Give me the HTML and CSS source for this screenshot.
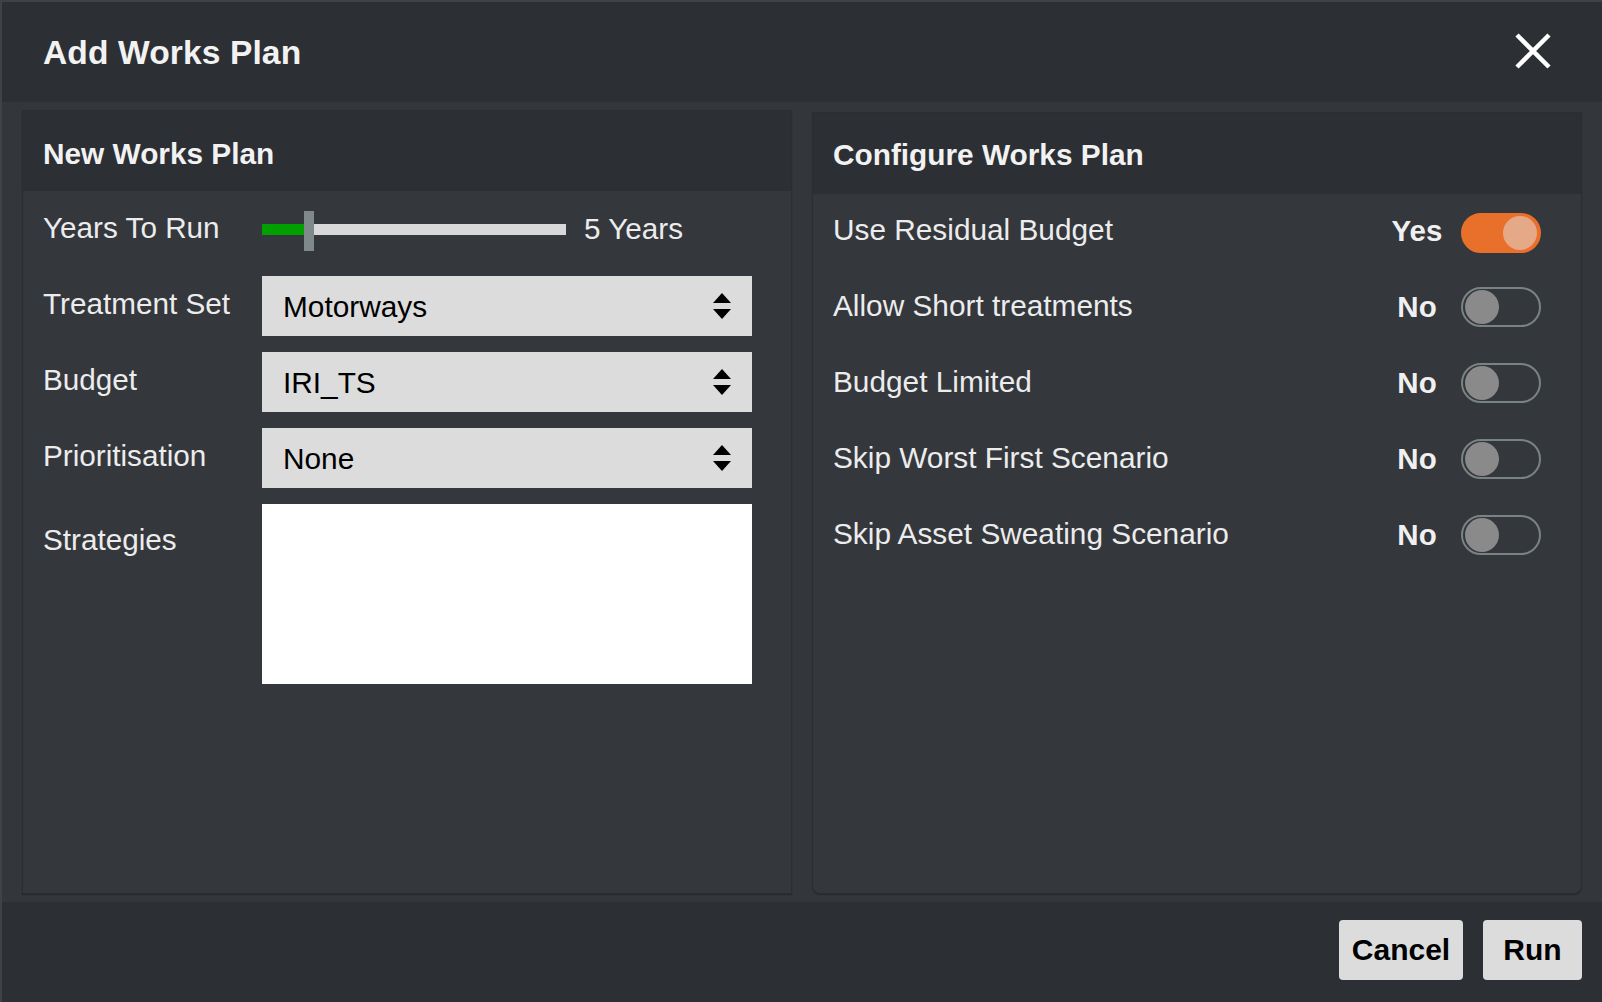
FILE: index.html
```html
<!DOCTYPE html>
<html>
<head>
<meta charset="utf-8">
<title>Add Works Plan</title>
<link rel="stylesheet" href="styles.css">
</head>
<body>
<div class="modal">
  <div class="modal-header">
    <h1 class="modal-title">Add Works Plan</h1>
    <button class="close-btn" aria-label="Close">
      <svg width="36" height="36" viewBox="0 0 36 36"><path d="M2 2 L34 34 M34 2 L2 34" stroke="#ffffff" stroke-width="4.5" stroke-linecap="butt" fill="none"/></svg>
    </button>
  </div>
  <div class="modal-body">
    <section class="panel panel-left">
      <div class="panel-header"><h2>New Works Plan</h2></div>
      <div class="panel-content form-grid">
        <div class="label">Years To Run</div>
        <div class="slider-wrap">
          <div class="slider">
            <div class="slider-fill" style="width: 42px"></div>
            <div class="slider-thumb" style="left: 42px"></div>
          </div>
          <span class="slider-value">5 Years</span>
        </div>

        <div class="label">Treatment Set</div>
        <div class="select"><span>Motorways</span><span class="arrows"><i class="up"></i><i class="down"></i></span></div>

        <div class="label">Budget</div>
        <div class="select"><span>IRI_TS</span><span class="arrows"><i class="up"></i><i class="down"></i></span></div>

        <div class="label">Prioritisation</div>
        <div class="select"><span>None</span><span class="arrows"><i class="up"></i><i class="down"></i></span></div>

        <div class="label label-top">Strategies</div>
        <div class="listbox"></div>
      </div>
    </section>
    <section class="panel panel-right">
      <div class="panel-header"><h2>Configure Works Plan</h2></div>
      <div class="panel-content options">
        <div class="option">
          <span class="option-label">Use Residual Budget</span>
          <span class="option-state">Yes</span>
          <span class="toggle on"><span class="knob"></span></span>
        </div>
        <div class="option">
          <span class="option-label">Allow Short treatments</span>
          <span class="option-state">No</span>
          <span class="toggle"><span class="knob"></span></span>
        </div>
        <div class="option">
          <span class="option-label">Budget Limited</span>
          <span class="option-state">No</span>
          <span class="toggle"><span class="knob"></span></span>
        </div>
        <div class="option">
          <span class="option-label">Skip Worst First Scenario</span>
          <span class="option-state">No</span>
          <span class="toggle"><span class="knob"></span></span>
        </div>
        <div class="option">
          <span class="option-label">Skip Asset Sweating Scenario</span>
          <span class="option-state">No</span>
          <span class="toggle"><span class="knob"></span></span>
        </div>
      </div>
    </section>
  </div>
  <div class="modal-footer">
    <button class="btn btn-cancel">Cancel</button>
    <button class="btn btn-run">Run</button>
  </div>
</div>
</body>
</html>
```

FILE: styles.css
```css
* { box-sizing: border-box; }

html, body {
  margin: 0;
  padding: 0;
  background: #2c2f34;
}

body {
  font-family: "Liberation Sans", Arial, Helvetica, sans-serif;
  color: #ececec;
}

.modal {
  width: 1602px;
  height: 1002px;
  display: flex;
  flex-direction: column;
  border-top: 2px solid #3f4247;
  border-left: 2px solid #3f4247;
  background: #2c2f34;
  overflow: hidden;
}

.modal-header {
  height: 100px;
  flex: none;
  display: flex;
  align-items: center;
  justify-content: space-between;
  padding: 2px 51px 0 41px;
  background: #2c2f34;
}

.modal-title {
  margin: 0;
  font-size: 33.6px;
  font-weight: bold;
  color: #f2f2f2;
  letter-spacing: 0.1px;
}

.close-btn {
  border: 0;
  padding: 0;
  background: transparent;
  width: 36px;
  height: 36px;
  display: flex;
  margin-top: -4px;
}

.modal-body {
  flex: 1;
  display: flex;
  gap: 20px;
  padding: 8px 20px 8px 20px;
  background: #33363b;
}

.panel {
  flex: 1;
  display: flex;
  flex-direction: column;
  background: #34373c;
  border: 1px solid #2a2d31;
  box-shadow: 0 1px 1px rgba(0,0,0,0.25);
}

.panel-right {
  margin-top: 2px;
  border-radius: 0 0 8px 8px;
}

.panel-header {
  height: 80px;
  flex: none;
  display: flex;
  align-items: center;
  padding: 5px 20px 0 20px;
  background: #2c2f34;
}

.panel-right .panel-header { height: 81px; padding-top: 3px; }

.panel-header h2 {
  margin: 0;
  font-size: 29.8px;
  font-weight: bold;
  color: #f2f2f2;
}

.panel-content { flex: 1; }

.form-grid {
  display: grid;
  grid-template-columns: 219px 490px;
  grid-template-rows: 61px 60px 60px 60px 180px;
  row-gap: 16px;
  padding: 8px 20px 0 20px;
  align-items: center;
}

.label {
  font-size: 29.7px;
  line-height: 34px;
  color: #ececec;
  margin-top: -4px;
}

.label-top {
  align-self: start;
  margin-top: 19px;
}

.slider-wrap {
  display: flex;
  align-items: center;
  gap: 18px;
}

.slider {
  position: relative;
  width: 304px;
  height: 11px;
  background: #d8d8d8;
}

.slider-fill {
  height: 100%;
  background: #00a000;
}

.slider-thumb {
  position: absolute;
  top: -13px;
  width: 10px;
  height: 40px;
  background: #7f8989;
}

.slider-value {
  font-size: 29.7px;
  color: #ececec;
  margin-top: -2px;
}

.select {
  height: 60px;
  background: #dcdcdc;
  color: #000;
  font-size: 29.8px;
  display: flex;
  align-items: center;
  justify-content: space-between;
  padding: 2px 21px 0 21px;
}

.arrows {
  display: flex;
  flex-direction: column;
  gap: 6px;
  margin-top: -2px;
}

.arrows i {
  display: block;
  width: 0;
  height: 0;
  border-left: 9px solid transparent;
  border-right: 9px solid transparent;
}

.arrows .up { border-bottom: 10px solid #000; }
.arrows .down { border-top: 10px solid #000; }

.listbox {
  height: 180px;
  background: #ffffff;
}

.options {
  display: flex;
  flex-direction: column;
  gap: 2px;
  padding: 0 40px 0 20px;
}

.option {
  height: 74px;
  display: flex;
  align-items: center;
}

.option-label {
  flex: 1;
  font-size: 29.8px;
  color: #ececec;
  margin-top: -2px;
}

.option-state {
  width: 70px;
  text-align: center;
  font-size: 29.5px;
  font-weight: bold;
  color: #f0f0f0;
  margin-right: 9px;
}

.toggle {
  position: relative;
  width: 80px;
  height: 40px;
  border: 2px solid #7a8383;
  border-radius: 20px;
  display: flex;
  align-items: center;
  padding: 0 2px;
}

.toggle .knob {
  width: 34px;
  height: 34px;
  border-radius: 50%;
  background: #8a8a8b;
}

.toggle.on {
  background: #e8702b;
  border-color: #e8702b;
  justify-content: flex-end;
  margin-top: 4px;
}

.toggle.on .knob {
  background: #e6a987;
}

.modal-footer {
  height: 100px;
  flex: none;
  display: flex;
  justify-content: flex-end;
  align-items: flex-start;
  gap: 20px;
  padding: 18px 20px 0 0;
  background: #2c2f34;
}

.btn {
  height: 60px;
  padding: 0;
  border: 0;
  border-radius: 4px;
  background: #dcdcdc;
  color: #000;
  font-family: "Liberation Sans", Arial, Helvetica, sans-serif;
  font-size: 30px;
  font-weight: bold;
  text-align: center;
}

.btn-cancel { width: 124px; }
.btn-run { width: 99px; }
```
